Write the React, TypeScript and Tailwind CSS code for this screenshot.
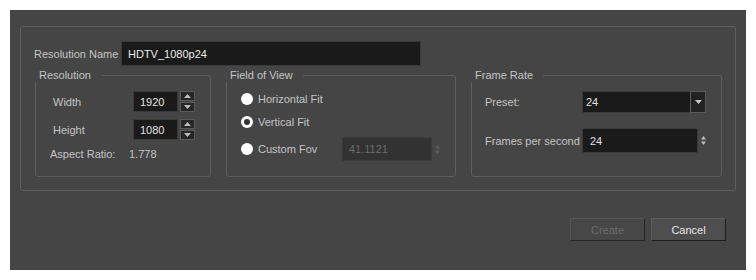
import React from "react";

const font = { fontFamily: '"Liberation Sans", Arial, sans-serif' };

function GroupBox({ title, className, children }: { title: string; className: string; children: React.ReactNode }) {
  return (
    <div className={`relative border border-[#5e5e5e] rounded-[3px] ${className}`}>
      <div className="absolute -top-[8px] -left-[1px] h-[14px] leading-[14px] pl-[4px] pr-[10px] bg-[#454545] text-[#c4c4c4]">
        {title}
      </div>
      {children}
    </div>
  );
}

function Tri({ down, color }: { down?: boolean; color: string }) {
  return (
    <svg width="7" height="4" viewBox="0 0 7 4">
      <polygon points={down ? "0,0 7,0 3.5,4" : "3.5,0 7,4 0,4"} fill={color} />
    </svg>
  );
}

function SpinBox({ value }: { value: string }) {
  return (
    <div className="flex items-center">
      <div className="w-[45px] h-[21px] bg-[#1a1a1a] border border-[#3a3a3a] pl-[6px] flex items-center text-[#e2e2e2]">
        {value}
      </div>
      <div className="ml-[2px] flex flex-col gap-[1px]">
        <div className="w-[15px] h-[10px] bg-[#262626] border border-[#5a5a5a] flex items-center justify-center">
          <Tri color="#bdbdbd" />
        </div>
        <div className="w-[15px] h-[10px] bg-[#262626] border border-[#5a5a5a] flex items-center justify-center">
          <Tri down color="#bdbdbd" />
        </div>
      </div>
    </div>
  );
}

function UpDown({ color }: { color: string }) {
  return (
    <svg width="5" height="9" viewBox="0 0 5 9">
      <polygon points="2.5,0 5,3.5 0,3.5" fill={color} />
      <polygon points="0,5.5 5,5.5 2.5,9" fill={color} />
    </svg>
  );
}

function Radio({ checked, label }: { checked?: boolean; label: string }) {
  return (
    <div className="flex items-center h-[14px]">
      <div className="w-[12px] h-[12px] rounded-full bg-white flex items-center justify-center">
        {checked && <div className="w-[6px] h-[6px] rounded-full bg-[#333333]" />}
      </div>
      <span className="ml-[5px] text-[#c4c4c4]">{label}</span>
    </div>
  );
}

export default function App() {
  return (
    <div className="w-[756px] h-[280px] bg-white p-[10px] text-[11px] leading-[14px]" style={font}>
      <div className="w-[736px] h-[260px] bg-[#454545] flex flex-col pt-[16px] px-[10px]">
        <div className="h-[165px] border border-[#5e5e5e] rounded-[3px] pt-[14px] px-[13px]">
          <div className="flex items-center h-[25px]">
            <span className="w-[87px] text-[#c4c4c4]">Resolution Name</span>
            <div className="w-[300px] h-[25px] bg-[#1a1a1a] border border-[#3a3a3a] pl-[6px] flex items-center text-[#ececec]">
              HDTV_1080p24
            </div>
          </div>

          <div className="flex mt-[9px] ml-[1px] gap-[15px]">
            <GroupBox title="Resolution" className="w-[176px] h-[102px] pt-[15px]">
              <div className="flex items-center ml-[17px]">
                <span className="w-[80px] text-[#c4c4c4]">Width</span>
                <SpinBox value="1920" />
              </div>
              <div className="flex items-center ml-[17px] mt-[7px]">
                <span className="w-[80px] text-[#c4c4c4]">Height</span>
                <SpinBox value="1080" />
              </div>
              <div className="flex items-center ml-[14px] mt-[7px] h-[14px]">
                <span className="w-[79px] text-[#c4c4c4]">Aspect Ratio:</span>
                <span className="text-[#c4c4c4]">1.778</span>
              </div>
            </GroupBox>

            <GroupBox title="Field of View" className="w-[230px] h-[102px] pt-[16px] pl-[14px]">
              <Radio label="Horizontal Fit" />
              <div className="mt-[9px]">
                <Radio checked label="Vertical Fit" />
              </div>
              <div className="mt-[8px] flex items-center h-[24px]">
                <div className="w-[101px]">
                  <Radio label="Custom Fov" />
                </div>
                <div className="w-[90px] h-[24px] bg-[#323232] border border-[#3a3a3a] pl-[6px] flex items-center text-[#6c6c6c]">
                  41.1121
                </div>
                <div className="ml-[3px] flex items-center">
                  <UpDown color="#5c5c5c" />
                </div>
              </div>
            </GroupBox>

            <GroupBox title="Frame Rate" className="w-[251px] h-[102px] pt-[15px] pl-[13px]">
              <div className="flex items-center">
                <span className="w-[97px] text-[#c4c4c4]">Preset:</span>
                <div className="w-[124px] h-[22px] bg-[#1a1a1a] border border-[#3a3a3a] flex items-center">
                  <span className="flex-1 pl-[3px] text-[#e2e2e2]">24</span>
                  <div className="w-[16px] h-[22px] -mr-[1px] bg-[#222222] border border-[#5c5c5c] flex items-center justify-center">
                    <Tri down color="#c8c8c8" />
                  </div>
                </div>
              </div>
              <div className="flex items-center mt-[15px]">
                <span className="w-[97px] text-[#c4c4c4]">Frames per second</span>
                <div className="w-[116px] h-[25px] bg-[#1a1a1a] border border-[#3a3a3a] pl-[7px] flex items-center text-[#e2e2e2]">
                  24
                </div>
                <div className="ml-[3px] flex items-center">
                  <UpDown color="#bdbdbd" />
                </div>
              </div>
            </GroupBox>
          </div>
        </div>

        <div className="mt-[27px] flex justify-end gap-[6px] pr-[10px]">
          <button className="w-[75px] h-[23px] bg-[#474747] border border-t-[#555555] border-l-[#555555] border-r-[#262626] border-b-[#262626] text-[#6c6c6c]">
            Create
          </button>
          <button className="w-[75px] h-[23px] bg-[#4e4e4e] border border-t-[#5c5c5c] border-l-[#5c5c5c] border-r-[#1e1e1e] border-b-[#1e1e1e] text-[#e6e6e6]">
            Cancel
          </button>
        </div>
      </div>
    </div>
  );
}
